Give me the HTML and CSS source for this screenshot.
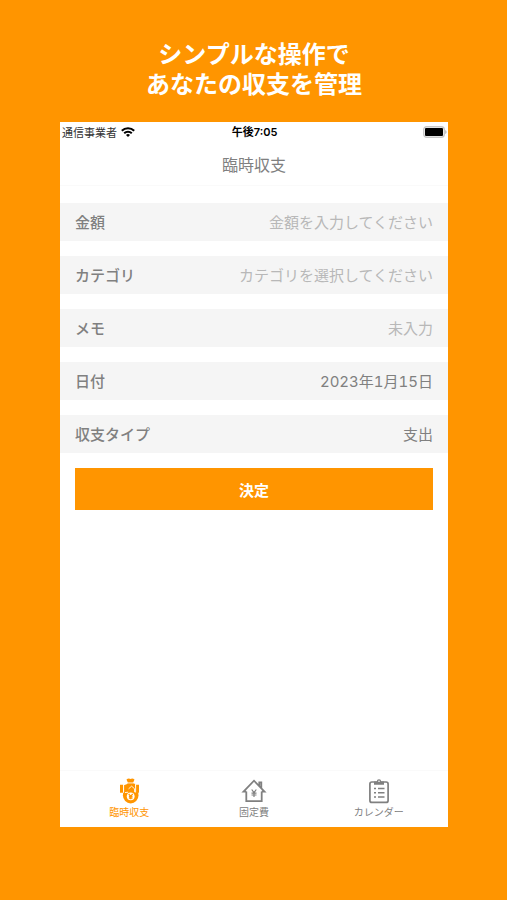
FILE: index.html
```html
<!DOCTYPE html>
<html lang="ja">
<head>
<meta charset="utf-8">
<meta name="viewport" content="width=device-width, initial-scale=1">
<title>臨時収支</title>
<link rel="stylesheet" href="styles.css">
</head>
<body>
<h1 class="headline">シンプルな操作で<br>あなたの収支を管理</h1>
<main class="phone">
  <div class="status">
    <div class="carrier">
      <span>通信事業者</span>
      <svg class="wifi" viewBox="0 0 28 20" aria-hidden="true">
        <g fill="none" stroke="#000" stroke-width="4">
          <path d="M1.6 7.6a17.5 17.5 0 0 1 24.8 0"/>
          <path d="M6.4 12.6a10.8 10.8 0 0 1 15.2 0"/>
        </g>
        <path d="M14 20l-4-4.200a5.700 5.700 0 0 1 8 0z"/>
      </svg>
    </div>
    <span class="time">午後7:05</span>
    <svg class="battery" viewBox="0 0 24 12" aria-hidden="true">
      <rect x=".7" y=".7" width="20.600" height="10.600" rx="3" fill="#fff" stroke="#c8c8c8" stroke-width="1.400"/>
      <rect x="2" y="2" width="18" height="8" rx="1"/>
      <path d="M22.200 4q1.400.6 1.400 2t-1.400 2z" fill="#b5b5b5"/>
    </svg>
  </div>
  <h2 class="title">臨時収支</h2>
  <form class="form">
    <div class="row">
      <label for="amount">金額</label>
      <input id="amount" type="text" placeholder="金額を入力してください">
    </div>
    <div class="row">
      <label for="category">カテゴリ</label>
      <select id="category" class="empty"><option>カテゴリを選択してください</option></select>
    </div>
    <div class="row">
      <label for="memo">メモ</label>
      <input id="memo" type="text" placeholder="未入力">
    </div>
    <div class="row">
      <label for="date">日付</label>
      <input id="date" class="date" type="text" value="2023年1月15日">
    </div>
    <div class="row">
      <label for="type">収支タイプ</label>
      <select id="type"><option>支出</option></select>
    </div>
    <button class="submit" type="button">決定</button>
  </form>
  <nav class="tabs">
    <a class="tab active" href="#extra">
      <svg viewBox="0 0 26 26" aria-hidden="true">
        <path fill="currentColor" d="M10.500 1.500q1.800-1.500 4-.6 2.200-.9 4 .6L17.200 4.600h-5.400z"/>
        <circle cx="14.700" cy="17.600" r="7.800" fill="currentColor"/>
        <path fill="currentColor" d="M11.500 5.400h6.200L22 13H8z"/>
        <path fill="currentColor" d="M4 6.800h3.200v8H4zM7.900 7.200l4-1.400h7.300V15H7.900zM20 6.800h3v8h-3z"/>
        <path fill="none" stroke="#fff" stroke-width=".9" d="M7.600 6.500v8.200M19.600 6.500v8M12.600 10.800l3-2.600 3 2.600v3.400M9 14.600l3.200-.4"/>
        <circle cx="14.700" cy="18.300" r="3.900" fill="#fff"/>
        <path fill="none" stroke="currentColor" stroke-width="1.200" d="M12.700 16l2 2.300 2-2.300M14.700 18.300v3M12.900 18.600h3.600M12.900 20.100h3.600"/>
      </svg>
      <span>臨時収支</span>
    </a>
    <a class="tab" href="#fixed">
      <svg viewBox="0 0 26 26" aria-hidden="true">
        <g fill="none" stroke="currentColor">
          <path stroke-width="1.800" d="M5.300 13.500v9.600h15.400v-9.600M5.300 13.700H2.500L13 2.700l10.500 11h-2.800M18.300 8V4.400h2V10"/>
          <path stroke-width="1.200" d="M10.700 11.500l2.300 3.200 2.300-3.200M13 14.500v4.500M10.500 15.100h5M10.500 17h5"/>
        </g>
      </svg>
      <span>固定費</span>
    </a>
    <a class="tab" href="#calendar">
      <svg viewBox="0 0 26 26" aria-hidden="true">
        <rect x="3.900" y="4" width="18.200" height="20.400" rx="2" fill="none" stroke="currentColor" stroke-width="1.700"/>
        <path fill="currentColor" d="M8 3.400h2.800a2.200 2.200 0 0 1 4.400 0H18v3.400H8z"/>
        <circle cx="13" cy="3.200" r=".8" fill="#fff"/>
        <path fill="none" stroke="currentColor" stroke-width="1.500" d="M8 10.600h2M12 10.600h6.500M8 14.800h2M12 14.800h6.500M8 19h2M12 19h6.500"/>
      </svg>
      <span>カレンダー</span>
    </a>
  </nav>
</main>
</body>
</html>
```

FILE: styles.css
```css
* {
  box-sizing: border-box;
}

body {
  margin: 0;
  min-height: 100vh;
  padding: 38px 59px 73px 60px;
  display: flex;
  flex-direction: column;
  background: #ff9500;
  font-family: "Noto Sans CJK JP", sans-serif;
  color: #808080;
}

.headline {
  margin: 0 0 24px;
  font-size: 24px;
  line-height: 30px;
  font-weight: 700;
  text-align: center;
  color: #fff;
}

.phone {
  flex: 1;
  display: flex;
  flex-direction: column;
  background: #fff;
}

.status {
  display: grid;
  grid-template-columns: 1fr auto 1fr;
  align-items: center;
  height: 20px;
  padding: 0 1px 0 2px;
  font-size: 11px;
  line-height: 20px;
  color: #333;
}

.carrier {
  display: flex;
  align-items: center;
  gap: 4px;
}

.wifi {
  width: 14px;
  height: 10px;
}

.time {
  font-family: Inter, "Noto Sans CJK JP", sans-serif;
  font-weight: 600;
  color: #000;
}

.battery {
  justify-self: end;
  width: 24px;
  height: 12px;
}

.title {
  margin: 0;
  height: 44px;
  border-bottom: 1px solid #fafafa;
  font-size: 16px;
  line-height: 44px;
  font-weight: 400;
  text-align: center;
}

.form {
  flex: 1;
  display: flex;
  flex-direction: column;
  gap: 15px;
  padding-top: 17px;
}

.row {
  display: flex;
  align-items: center;
  height: 38px;
  padding: 0 15px 2px;
  background: #f5f5f5;
  font-size: 15px;
}

.row label {
  flex: none;
  font-weight: 500;
}

.row input,
.row select {
  flex: 1;
  min-width: 0;
  height: 100%;
  margin: 0;
  padding: 0;
  border: 0;
  appearance: none;
  background: none;
  font: inherit;
  color: inherit;
  text-align: right;
  text-align-last: right;
}

.row input::placeholder,
.row .empty {
  color: #b8b8b8;
  opacity: 1;
}

.row .date {
  font-family: Inter, "Noto Sans CJK JP", sans-serif;
  font-variant-numeric: tabular-nums;
}

.submit {
  height: 42px;
  margin: 0 15px;
  padding: 0;
  border: 0;
  background: #ff9500;
  font: 700 15px "Noto Sans CJK JP", sans-serif;
  color: #fff;
}

.tabs {
  display: grid;
  grid-template-columns: repeat(3, 1fr);
  height: 57px;
  padding: 7px 7px 0;
  border-top: 1px solid #fafafa;
}

.tab {
  display: flex;
  flex-direction: column;
  align-items: center;
  font-size: 10px;
  line-height: 16px;
  color: #808080;
  text-decoration: none;
}

.tab svg {
  width: 26px;
  height: 26px;
}

.active {
  color: #ff9500;
}
```
